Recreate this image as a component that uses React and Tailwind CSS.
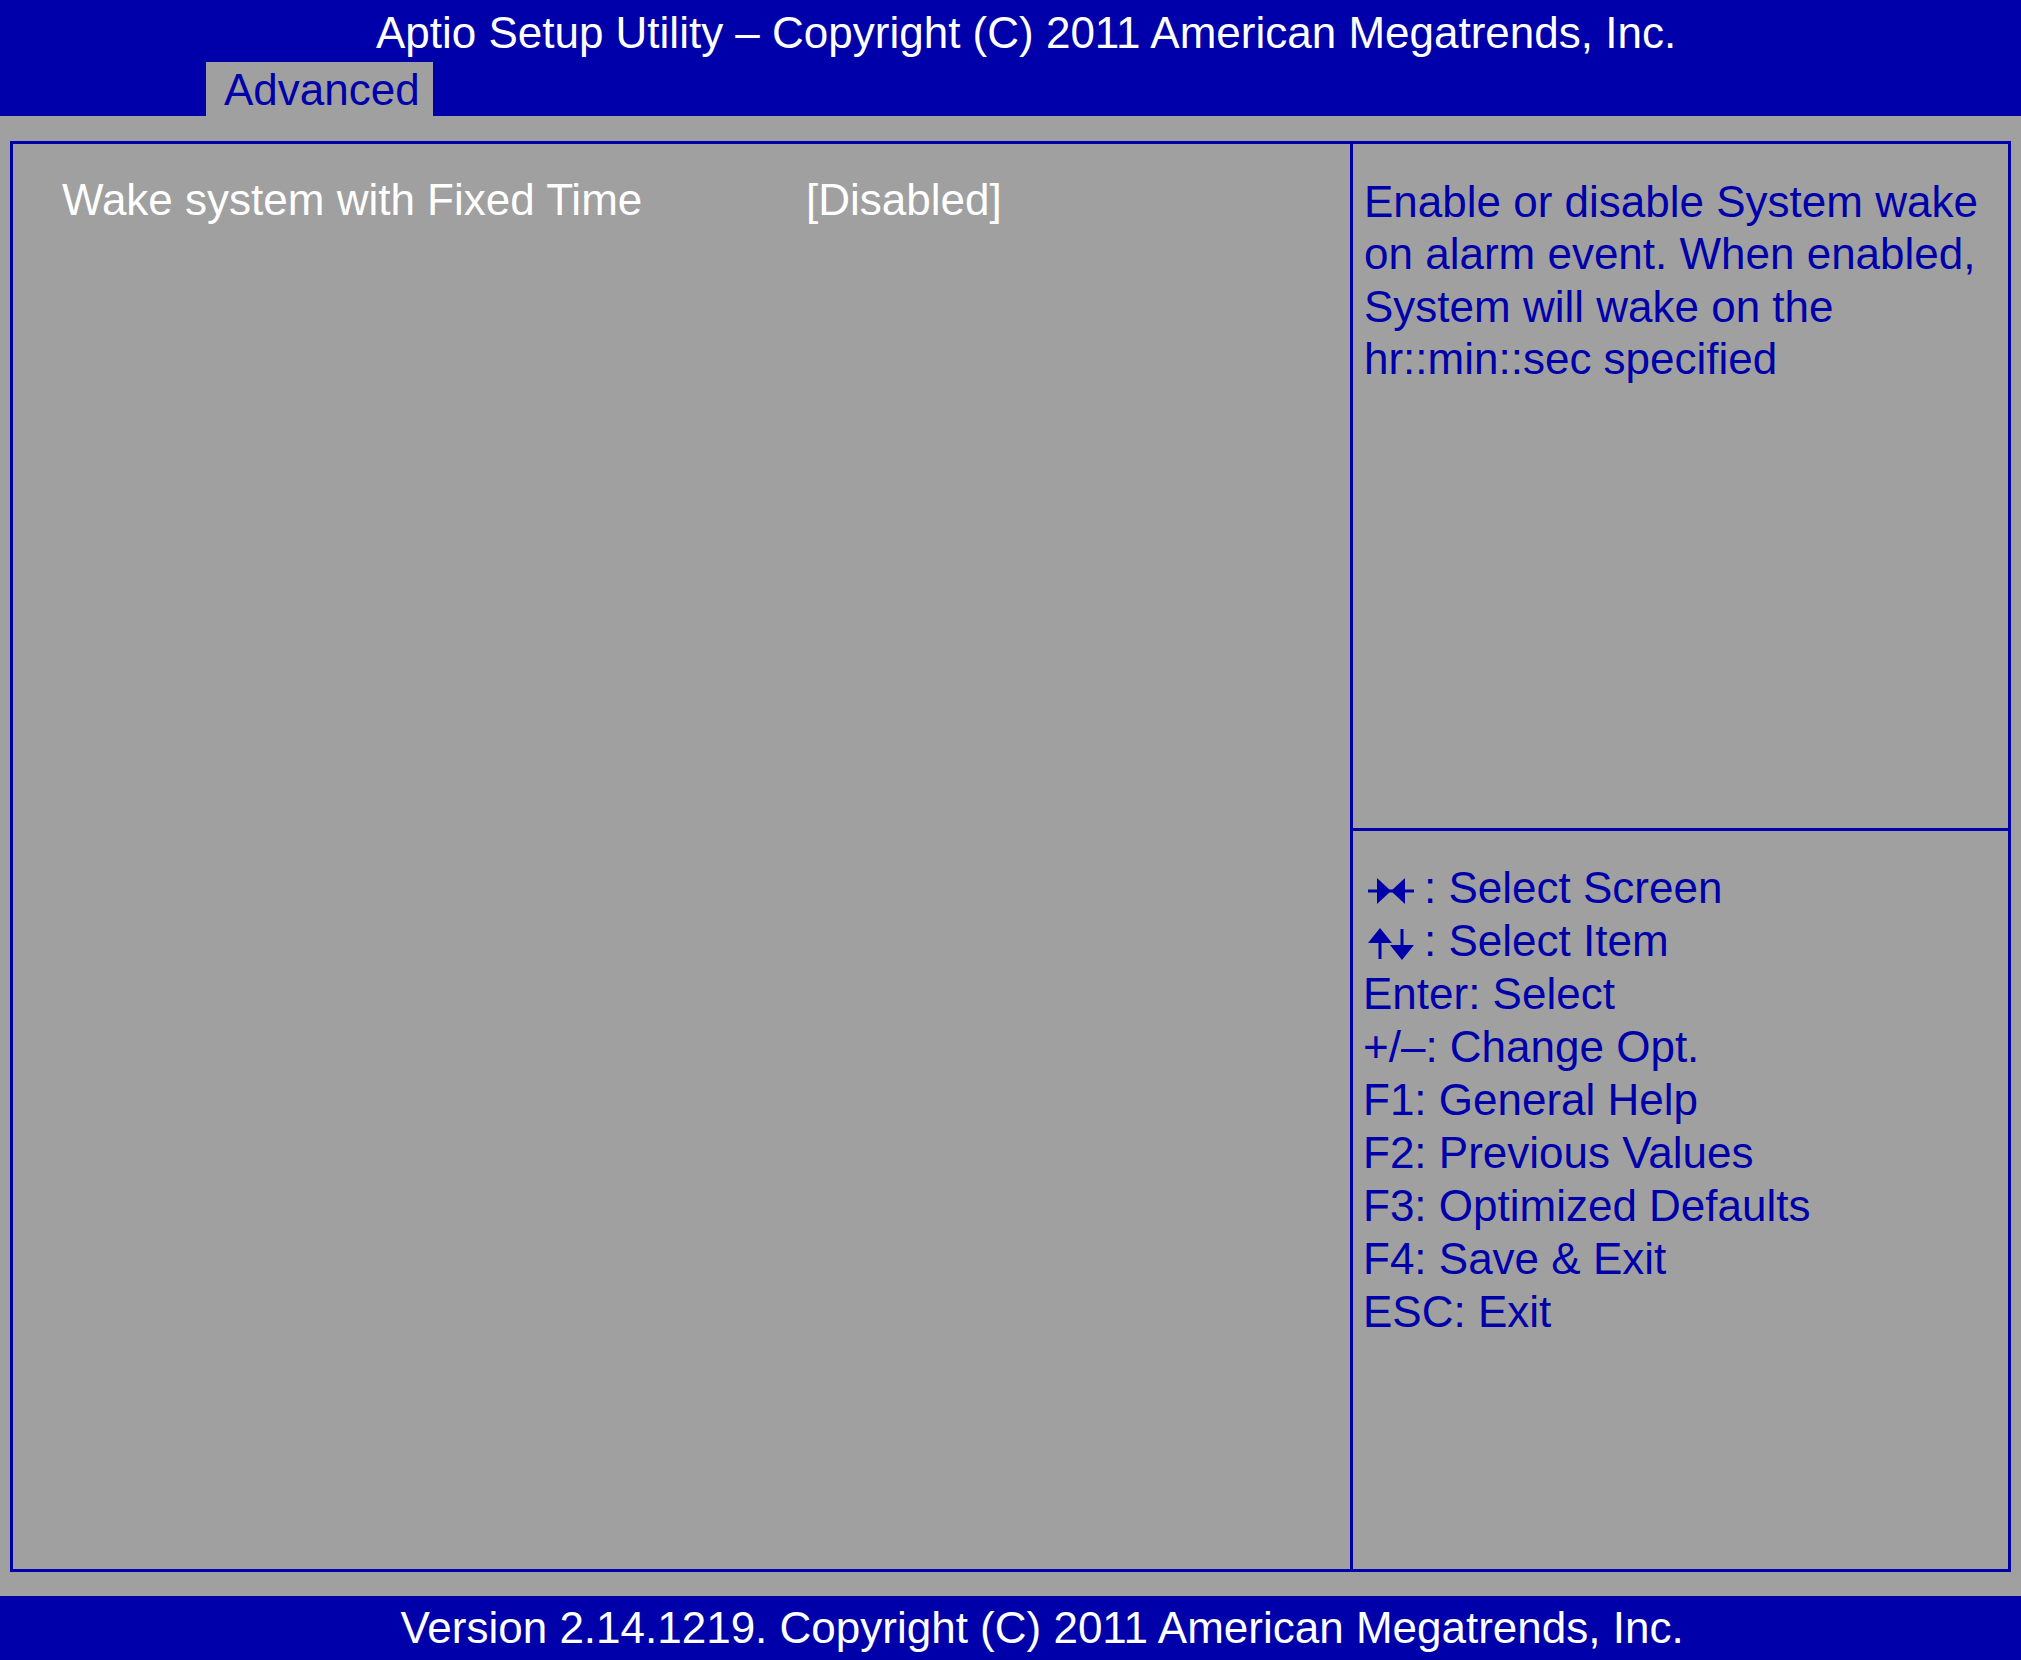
const BLUE = "#0000aa";

function ScreenArrows() {
  return (
    <svg className="inline-block align-middle ml-[5px]" width="46" height="26" viewBox="0 0 46 26" fill="#0000aa">
      <rect x="0" y="11.5" width="46" height="3" />
      <polygon points="9,0 23,13 9,26" />
      <polygon points="37,0 23,13 37,26" />
    </svg>
  );
}

function ItemArrows() {
  return (
    <svg className="inline-block align-middle ml-[5px]" width="46" height="32" viewBox="0 0 46 32" fill="#0000aa">
      <polygon points="0,15 12,0 24,15" />
      <rect x="10.5" y="12" width="3" height="19" />
      <rect x="32.5" y="1" width="3" height="18" />
      <polygon points="22,17 34,32 46,17" />
    </svg>
  );
}

const keys = [
  "Enter: Select",
  "+/\u2013: Change Opt.",
  "F1: General Help",
  "F2: Previous Values",
  "F3: Optimized Defaults",
  "F4: Save & Exit",
  "ESC: Exit",
];

export default function App() {
  return (
    <div className="w-[2021px] h-[1660px] bg-[#a0a0a0] flex flex-col overflow-hidden font-['Liberation_Sans',Arial,sans-serif] text-[44px] leading-[48px]">
      <header className="h-[116px] shrink-0 bg-[#0000aa] flex flex-col">
        <div className="h-[62px] pt-[9px] pl-[31px] text-center text-white whitespace-nowrap">
          Aptio Setup Utility – Copyright (C) 2011 American Megatrends, Inc.
        </div>
        <div className="h-[54px] pl-[206px] flex">
          <div className="w-[227px] bg-[#a0a0a0] pl-[18px] pt-[4px] text-[#0000aa]">Advanced</div>
        </div>
      </header>

      <main className="mt-[25px] mx-[10px] h-[1431px] shrink-0 border-[3px] border-[#0000aa] flex">
        <section className="w-[1337px] shrink-0 pl-[49px] pt-[32px] text-white flex items-start whitespace-nowrap">
          <span className="w-[744px] shrink-0">Wake system with Fixed Time</span>
          <span>[Disabled]</span>
        </section>

        <aside className="flex-1 border-l-[3px] border-[#0000aa] flex flex-col text-[#0000aa]">
          <div className="h-[684px] shrink-0 pl-[11px] pr-[2px] pt-[32px] leading-[52.3px]">
            Enable or disable System wake on alarm event. When enabled, System will wake on the hr::min::sec specified
          </div>
          <div className="flex-1 border-t-[3px] border-[#0000aa] pl-[10px] pt-[30px] leading-[53px] whitespace-nowrap">
            <div>
              <ScreenArrows />
              <span className="ml-[10px]">: Select Screen</span>
            </div>
            <div>
              <ItemArrows />
              <span className="ml-[10px]">: Select Item</span>
            </div>
            {keys.map((k) => (
              <div key={k}>{k}</div>
            ))}
          </div>
        </aside>
      </main>

      <footer className="mt-auto h-[64px] shrink-0 bg-[#0000aa] pt-[8px] pl-[63px] text-center text-white whitespace-nowrap">
        Version 2.14.1219. Copyright (C) 2011 American Megatrends, Inc.
      </footer>
    </div>
  );
}
